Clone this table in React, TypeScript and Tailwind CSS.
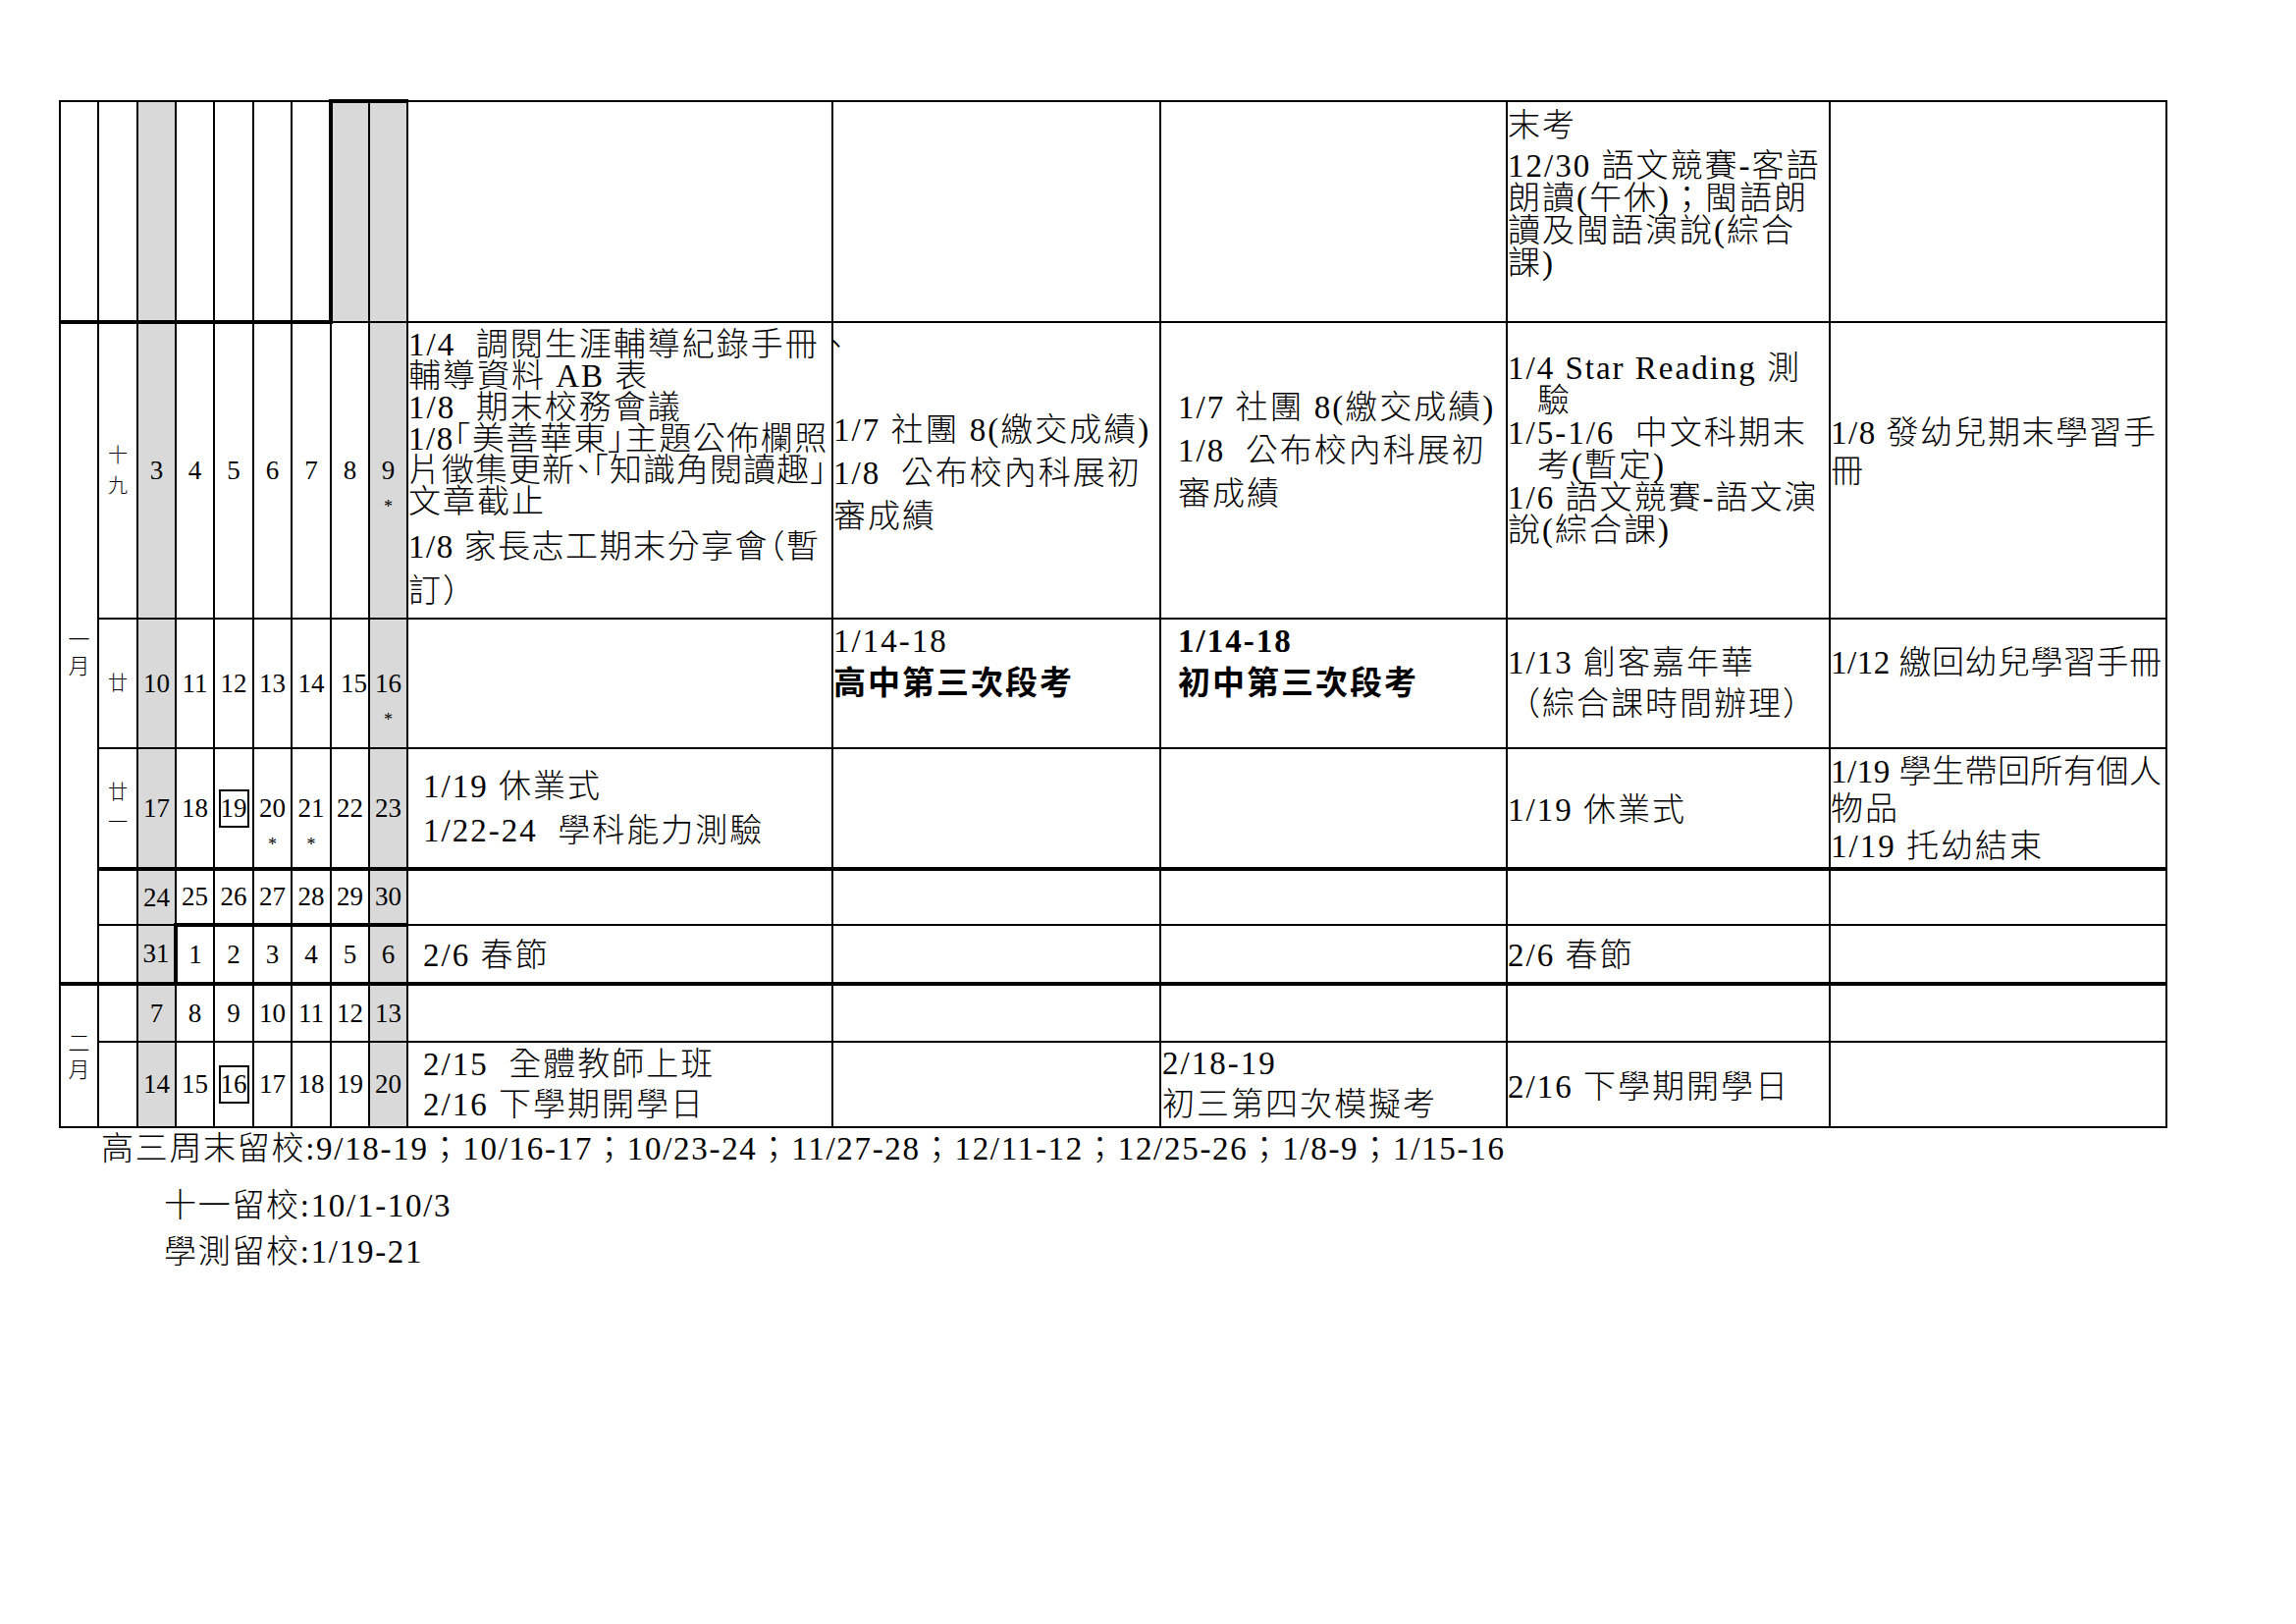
import type { ReactNode } from "react"

type Day = { n: string; star?: boolean; box?: boolean; nudge?: boolean }

const cell = "border-2 border-black p-0"
const gray = "bg-[#d9d9d9]"

const weeks: { label: string[]; days: Day[] }[] = [
    { label: [], days: [{ n: "" }, { n: "" }, { n: "" }, { n: "" }, { n: "" }, { n: "" }, { n: "" }] },
    { label: ["十", "九"], days: [{ n: "3" }, { n: "4" }, { n: "5" }, { n: "6" }, { n: "7" }, { n: "8" }, { n: "9", star: true }] },
    { label: ["廿"], days: [{ n: "10" }, { n: "11" }, { n: "12" }, { n: "13" }, { n: "14" }, { n: "15", nudge: true }, { n: "16", star: true }] },
    { label: ["廿", "一"], days: [{ n: "17" }, { n: "18" }, { n: "19", box: true }, { n: "20", star: true }, { n: "21", star: true }, { n: "22" }, { n: "23" }] },
    { label: [], days: [{ n: "24" }, { n: "25" }, { n: "26" }, { n: "27" }, { n: "28" }, { n: "29" }, { n: "30" }] },
    { label: [], days: [{ n: "31" }, { n: "1" }, { n: "2" }, { n: "3" }, { n: "4" }, { n: "5" }, { n: "6" }] },
    { label: [], days: [{ n: "7" }, { n: "8" }, { n: "9" }, { n: "10" }, { n: "11" }, { n: "12" }, { n: "13" }] },
    { label: [], days: [{ n: "14" }, { n: "15" }, { n: "16", box: true }, { n: "17" }, { n: "18" }, { n: "19" }, { n: "20" }] },
]

const rowHeights = ["h-[225px]", "h-[302px]", "h-[132px]", "h-[123px]", "h-[57px]", "h-[60px]", "h-[59px]", "h-[87px]"]

function Line({ children, className = "" }: { children: ReactNode; className?: string }) {
    return <div className={`whitespace-nowrap ${className}`}>{children}</div>
}

function Halt({ children }: { children: ReactNode }) {
    return <span className="[font-feature-settings:'halt']">{children}</span>
}

// thick rule lines that mark month boundaries
function dayBorder(row: number, col: number) {
    if (row === 0 && col < 5) return "border-b-4"
    if (row === 0 && col === 5) return "border-l-4 border-t-4"
    if (row === 0 && col === 6) return "border-t-4"
    if (row === 4 || row === 6) return "border-t-4"
    if (row === 5 && col === 1) return "border-l-4 border-t-4"
    if (row === 5 && col > 1) return "border-t-4"
    return ""
}

function DayCell({ day, row, col }: { day: Day; row: number; col: number }) {
    const shaded = col === 0 || col === 6 || (row === 0 && col === 5)
    return (
        <td className={`${cell} ${dayBorder(row, col)} ${shaded ? gray : ""} text-center align-middle text-[27px] leading-[27px] tracking-normal`}>
            {day.n && (
                <span className={`relative inline-block ${day.box ? "border-2 border-black leading-[35px]" : ""} ${day.nudge ? "pl-2" : ""}`}>
                    {day.n}
                    {day.star && (
                        <span className="absolute left-1/2 top-[41px] -translate-x-1/2 text-[18px] leading-none">*</span>
                    )}
                </span>
            )}
        </td>
    )
}

const sp = "\u00a0\u00a0"

// the five note columns for every week row
const notes: ReactNode[][] = [
    [
        null,
        null,
        null,
        <div className="pt-[8px] leading-[33px]">
            <Line className="mb-[8px]">末考</Line>
            <Line>12/30 語文競賽-客語</Line>
            <Line>朗讀(午休)；閩語朗</Line>
            <Line>讀及閩語演說(綜合</Line>
            <Line>課)</Line>
        </div>,
        null,
    ],
    [
        <div className="pt-[6px]">
            <div className="leading-[32px]">
                <Line>1/4{sp}調閱生涯輔導紀錄手冊、</Line>
                <Line>輔導資料 AB 表</Line>
                <Line>1/8{sp}期末校務會議</Line>
                <Line className="tracking-[1.5px]">
                    1/8<Halt>「</Halt>美善華東<Halt>」</Halt>主題公佈欄照
                </Line>
                <Line className="tracking-[1px]">
                    片徵集更新<Halt>、「</Halt>知識角閱讀趣<Halt>」</Halt>
                </Line>
                <Line>文章截止</Line>
            </div>
            <div className="mt-[8px] leading-[45px]">
                <Line className="tracking-[1.5px]">
                    1/8 家長志工期末分享會<Halt>（</Halt>暫
                </Line>
                <Line>訂）</Line>
            </div>
        </div>,
        <div className="pt-[87px] leading-[44px]">
            <Line>1/7 社團 8(繳交成績)</Line>
            <Line>1/8{sp}公布校內科展初</Line>
            <Line>審成績</Line>
        </div>,
        <div className="pt-[64px] pl-[17px] leading-[44px]">
            <Line>1/7 社團 8(繳交成績)</Line>
            <Line>1/8{sp}公布校內科展初</Line>
            <Line>審成績</Line>
        </div>,
        <div className="pt-[30px] leading-[33px]">
            <Line>1/4 Star Reading 測</Line>
            <Line className="pl-[30px]">驗</Line>
            <Line>1/5-1/6{sp}中文科期末</Line>
            <Line className="pl-[30px]">考(暫定)</Line>
            <Line>1/6 語文競賽-語文演</Line>
            <Line>說(綜合課)</Line>
        </div>,
        <div className="pt-[93px] leading-[39px]">
            <Line className="tracking-[1.5px]">1/8 發幼兒期末學習手</Line>
            <Line>冊</Line>
        </div>,
    ],
    [
        null,
        <div className="pt-px leading-[43px]">
            <Line>1/14-18</Line>
            <Line className="font-bold">高中第三次段考</Line>
        </div>,
        <div className="pt-px pl-[17px] leading-[43px] font-bold">
            <Line>1/14-18</Line>
            <Line>初中第三次段考</Line>
        </div>,
        <div className="pt-[23px] leading-[42px]">
            <Line>1/13 創客嘉年華</Line>
            <Line>（綜合課時間辦理）</Line>
        </div>,
        <div className="pt-[23px] leading-[42px]">
            <Line className="tracking-[0.5px]">1/12 繳回幼兒學習手冊</Line>
        </div>,
    ],
    [
        <div className="pt-[16px] pl-[15px] leading-[45px]">
            <Line>1/19 休業式</Line>
            <Line>1/22-24{sp}學科能力測驗</Line>
        </div>,
        null,
        null,
        <div className="pt-[46px] leading-[33px]">
            <Line>1/19 休業式</Line>
        </div>,
        <div className="pt-[4px] leading-[38px]">
            <Line className="tracking-[0.5px]">1/19 學生帶回所有個人</Line>
            <Line>物品</Line>
            <Line>1/19 托幼結束</Line>
        </div>,
    ],
    [null, null, null, null, null],
    [
        <div className="pt-[14px] pl-[15px] leading-[33px]">
            <Line>2/6 春節</Line>
        </div>,
        null,
        null,
        <div className="pt-[14px] leading-[33px]">
            <Line>2/6 春節</Line>
        </div>,
        null,
    ],
    [null, null, null, null, null],
    [
        <div className="pt-[2px] pl-[15px] leading-[41px]">
            <Line>2/15{sp}全體教師上班</Line>
            <Line>2/16 下學期開學日</Line>
        </div>,
        null,
        <div className="pl-px leading-[42px]">
            <Line>2/18-19</Line>
            <Line>初三第四次模擬考</Line>
        </div>,
        <div className="pt-[29px] leading-[33px]">
            <Line>2/16 下學期開學日</Line>
        </div>,
        null,
    ],
]

function MonthLabel({ chars }: { chars: string[] }) {
    return (
        <div className="flex flex-col items-center text-[22px] leading-[27px] tracking-normal">
            {chars.map((c, i) => (
                <span key={i}>{c}</span>
            ))}
        </div>
    )
}

export default function App() {
    return (
        <div className="min-h-screen bg-white pl-[60px] pt-[101px] text-black [font-family:'Liberation_Serif','Noto_Sans_CJK_TC',serif] text-[33px] tracking-[2px] font-light">
            <table className="w-[2146px] table-fixed border-collapse">
                <colgroup>
                    <col className="w-[39px]" />
                    <col className="w-[40px]" />
                    <col className="w-[39px]" />
                    <col className="w-[39px]" />
                    <col className="w-[40px]" />
                    <col className="w-[39px]" />
                    <col className="w-[40px]" />
                    <col className="w-[39px]" />
                    <col className="w-[39px]" />
                    <col className="w-[433px]" />
                    <col className="w-[334px]" />
                    <col className="w-[353px]" />
                    <col className="w-[329px]" />
                    <col className="w-[343px]" />
                </colgroup>
                <tbody>
                    {weeks.map((week, r) => (
                        <tr key={r} className={rowHeights[r]}>
                            {r === 0 && <td className={`${cell} border-b-4`} />}
                            {r === 1 && (
                                <td rowSpan={5} className={`${cell} border-t-4 align-middle`}>
                                    <MonthLabel chars={["一", "月"]} />
                                </td>
                            )}
                            {r === 6 && (
                                <td rowSpan={2} className={`${cell} border-t-4 align-middle`}>
                                    <MonthLabel chars={["二", "月"]} />
                                </td>
                            )}
                            <td
                                className={`${cell} ${r === 0 ? "border-b-4" : ""} ${r === 4 || r === 6 ? "border-t-4" : ""} align-middle`}
                            >
                                <div className="flex flex-col items-center text-[20px] leading-[31px] tracking-normal">
                                    {week.label.map((c, i) => (
                                        <span key={i}>{c}</span>
                                    ))}
                                </div>
                            </td>
                            {week.days.map((d, c) => (
                                <DayCell key={c} day={d} row={r} col={c} />
                            ))}
                            {notes[r].map((content, c) => (
                                <td key={c} className={`${cell} ${r === 4 || r === 6 ? "border-t-4" : ""} align-top`}>
                                    {content}
                                </td>
                            ))}
                        </tr>
                    ))}
                </tbody>
            </table>

            <div className="mt-[5px] tracking-[1.7px]">
                <Line className="ml-[43px] leading-[33px]">
                    高三周末留校:9/18-19；10/16-17；10/23-24；11/27-28；12/11-12；12/25-26；1/8-9；1/15-16
                </Line>
                <Line className="ml-[107px] mt-[25px] leading-[33px]">十一留校:10/1-10/3</Line>
                <Line className="ml-[107px] mt-[14px] leading-[33px]">學測留校:1/19-21</Line>
            </div>
        </div>
    )
}
